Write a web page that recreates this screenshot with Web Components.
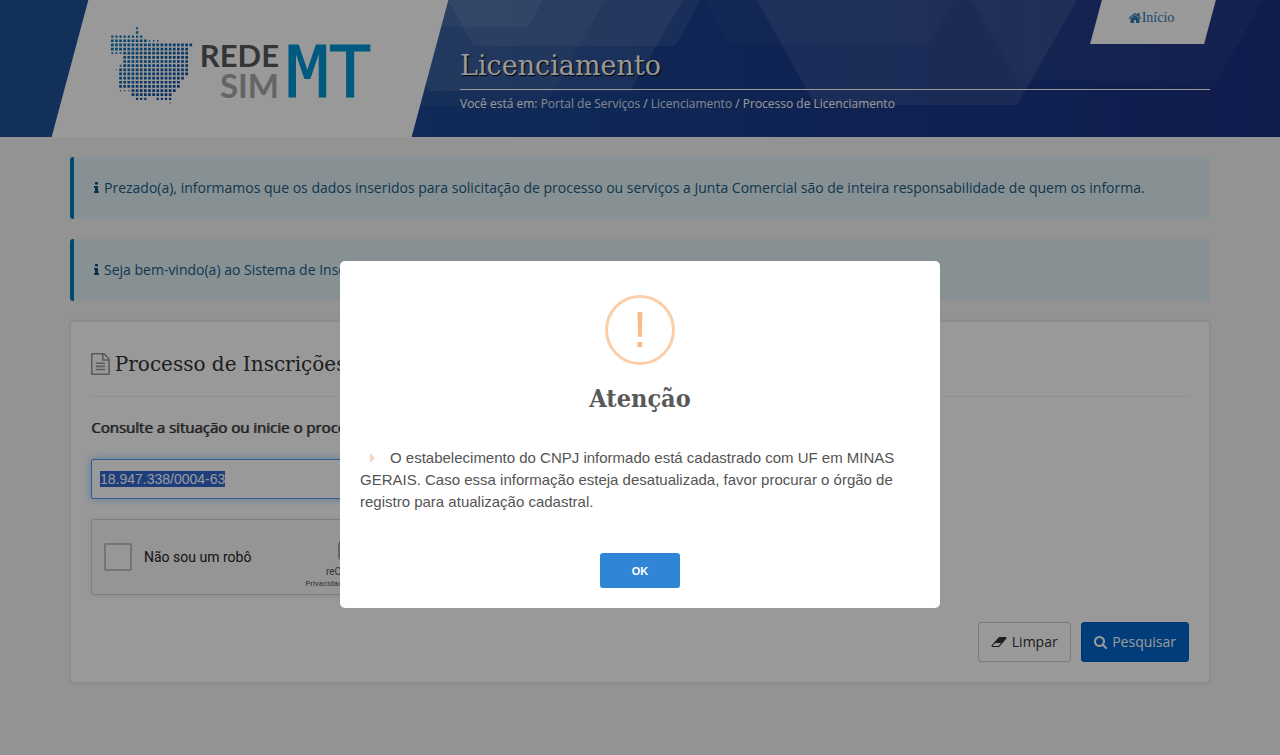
<!DOCTYPE html>
<html lang="pt-BR">
<head>
<meta charset="utf-8">
<meta name="viewport" content="width=device-width, initial-scale=1">
<title>Licenciamento</title>
<style>
  :root {
    --slab: "DejaVu Serif", serif;
    --gutter: 70px;
  }
  * { box-sizing: border-box; }
  body {
    margin: 0;
    background: #f6f6f6;
    color: #333;
    font: 14px/20px "Open Sans", sans-serif;
  }
  main {
    display: flex;
    flex-direction: column;
    gap: 20px;
    padding: 20px var(--gutter);
  }
</style>
</head>
<body>
<site-header heading="Licenciamento">
  <span slot="current">Processo de Licenciamento</span>
</site-header>
<main>
  <info-alert>Prezado(a), informamos que os dados inseridos para solicitação de processo ou serviços a Junta Comercial são de inteira responsabilidade de quem os informa.</info-alert>
  <info-alert>Seja bem-vindo(a) ao Sistema de Inscrições.</info-alert>
  <search-panel>
    <span slot="title">Processo de Inscrições</span>
  </search-panel>
</main>
<alert-modal heading="Atenção">O estabelecimento do CNPJ informado está cadastrado com UF em MINAS GERAIS. Caso essa informação esteja desatualizada, favor procurar o órgão de registro para atualização cadastral.</alert-modal>

<script>
const ICONS = {
  home: ['0 0 1792 1792', 'M1472 992v480q0 26-19 45t-45 19h-384v-384h-256v384h-384q-26 0-45-19t-19-45v-480q0-1 .5-3t.5-3l575-474 575 474q1 2 1 6zm223-69l-62 74q-8 9-21 11h-3q-13 0-21-7l-692-577-692 577q-12 8-24 7-13-2-21-11l-62-74q-8-10-7-23.5t11-21.5l719-599q32-26 76-26t76 26l244 204v-195q0-14 9-23t23-9h192q14 0 23 9t9 23v408l219 182q10 8 11 21.5t-7 23.5z'],
  info: ['576 0 640 1792', 'M1216 1344v128q0 26-19 45t-45 19h-512q-26 0-45-19t-19-45v-128q0-26 19-45t45-19h64v-384h-64q-26 0-45-19t-19-45v-128q0-26 19-45t45-19h384q26 0 45 19t19 45v576h64q26 0 45 19t19 45zm-128-1152v192q0 26-19 45t-45 19h-256q-26 0-45-19t-19-45v-192q0-26 19-45t45-19h256q26 0 45 19t19 45z'],
  file: ['128 0 1536 1792', 'M1596 380q28 28 48 76t20 88v1152q0 40-28 68t-68 28h-1344q-40 0-68-28t-28-68v-1600q0-40 28-68t68-28h896q40 0 88 20t76 48zm-444-244v376h376q-10-29-22-41l-313-313q-12-12-41-22zm384 1528v-1024h-416q-40 0-68-28t-28-68v-416h-768v1536h1280zm-1024-864q0-14 9-23t23-9h704q14 0 23 9t9 23v64q0 14-9 23t-23 9h-704q-14 0-23-9t-9-23v-64zm736 224q14 0 23 9t9 23v64q0 14-9 23t-23 9h-704q-14 0-23-9t-9-23v-64q0-14 9-23t23-9h704zm0 256q14 0 23 9t9 23v64q0 14-9 23t-23 9h-704q-14 0-23-9t-9-23v-64q0-14 9-23t23-9h704z'],
  eraser: ['0 0 2048 1792', 'M960 1408l336-384h-768l-336 384h768zm1013-1077q15 34 9.5 71.5t-30.5 65.5l-896 1024q-38 44-96 44h-768q-38 0-69.5-20.5t-47.5-54.5q-15-34-9.5-71.5t30.5-65.5l896-1024q38-44 96-44h768q38 0 69.5 20.5t47.5 54.5z'],
  search: ['64 0 1728 1792', 'M1216 832q0-185-131.5-316.5t-316.5-131.5-316.5 131.5-131.5 316.5 131.5 316.5 316.5 131.5 316.5-131.5 131.5-316.5zm512 832q0 52-38 90t-90 38q-54 0-90-38l-343-342q-179 124-399 124-143 0-273.5-55.5t-225-150-150-225-55.5-273.5 55.5-273.5 150-225 225-150 273.5-55.5 273.5 55.5 225 150 150 225 55.5 273.5q0 220-124 399l343 343q37 37 37 90z'],
  caret: ['0 0 5 10', 'M0 0l5 5-5 5z']
};

class FaIcon extends HTMLElement {
  connectedCallback() {
    const [viewBox, path] = ICONS[this.getAttribute('name')];
    this.attachShadow({ mode: 'open' }).innerHTML = `
      <style>
        :host { display: inline-block; height: 14px; flex: none; }
        svg { display: block; height: 100%; fill: currentColor; }
      </style>
      <svg viewBox="${viewBox}" aria-hidden="true"><path d="${path}"/></svg>
    `;
  }
}
customElements.define('fa-icon', FaIcon);

// [row, first column, last column, dot size]
const MAP_ROWS = [
  [0, 6, 6, 2], [1, 6, 6, 2.4], [2, 0, 7, 2.2], [3, 0, 8, 2.7], [3, 9, 11, 1.4],
  [4, 0, 19, 2.7], [5, 0, 18, 2.7], [6, 0, 2, 1.8], [6, 3, 18, 2.7],
  [7, 3, 18, 2.7], [8, 3, 18, 2.7], [9, 2, 2, 1.6], [9, 3, 18, 2.7],
  [10, 1, 1, 1], [10, 2, 18, 2.7], [11, 2, 18, 2.7], [12, 2, 17, 2.7],
  [13, 2, 16, 2.7], [14, 2, 16, 2.7], [15, 2, 4, 1.2], [15, 5, 15, 2.7],
  [16, 5, 14, 2.7], [17, 6, 8, 2.2], [17, 11, 14, 2.2], [18, 14, 14, 1.2]
];

class BrandLogo extends HTMLElement {
  connectedCallback() {
    this.attachShadow({ mode: 'open' }).innerHTML = `
      <style>
        :host { display: block; }
        svg { display: block; width: 264px; height: 78px; overflow: visible; }
        text { font-family: Lato, sans-serif; font-weight: 700; }
        .rede { font-size: 31px; fill: #58595b; }
        .sim { font-size: 33px; fill: #a7a9ac; }
        .mt {
          font-family: "DejaVu Sans Mono", monospace;
          font-weight: 400;
          font-size: 71px;
          fill: #0096d6;
          stroke: #0096d6;
          stroke-width: 1;
          stroke-linejoin: round;
        }
      </style>
      <svg viewBox="0 0 264 78" role="img" aria-label="Rede Sim MT">
        <defs>
          <linearGradient id="map" gradientUnits="userSpaceOnUse" x1="10" y1="10" x2="60" y2="70">
            <stop offset="0" stop-color="#0a7ab8"/>
            <stop offset="1" stop-color="#104a9c"/>
          </linearGradient>
        </defs>
        <path d="${this.dots()}" fill="url(#map)"/>
        <text class="rede" x="169" y="41" text-anchor="end">REDE</text>
        <text class="sim" x="169" y="72" text-anchor="end">SIM</text>
        <text class="mt" x="176" y="71">MT</text>
      </svg>
    `;
  }

  dots() {
    let d = '';
    for (const [row, from, to, size] of MAP_ROWS) {
      for (let col = from; col <= to; col++) {
        const x = (2.3 + col * 4.13 - size / 2).toFixed(2);
        const y = (2.3 + row * 4.15 - size / 2).toFixed(2);
        d += `M${x} ${y}h${size}v${size}h-${size}z`;
      }
    }
    return d;
  }
}
customElements.define('brand-logo', BrandLogo);

class SiteHeader extends HTMLElement {
  connectedCallback() {
    this.attachShadow({ mode: 'open' }).innerHTML = `
      <style>
        * { box-sizing: border-box; }
        :host {
          display: block;
          position: relative;
          overflow: hidden;
          background: linear-gradient(90deg, #1e5298 0, #1b4590 40%, #193c8a 60%, #1b2f7f 100%);
          color: #fff;
        }
        .shapes { position: absolute; top: 0; left: 0; width: 100%; height: 100%; fill: #fff; }
        .bar { display: flex; gap: 30px; position: relative; padding: 0 var(--gutter); }
        .brand, .home { position: relative; }
        .brand::before, .home::before {
          content: "";
          position: absolute;
          inset: 0;
          background: #fff;
          transform: skewX(-15deg);
        }
        .brand { width: 360px; padding: 26px 40px 33px; flex: none; }
        brand-logo { position: relative; }
        .content { flex: 1; display: flex; flex-direction: column; }
        .home {
          align-self: flex-end;
          width: 114px;
          height: 44px;
          display: flex;
          align-items: flex-start;
          justify-content: center;
          padding: 8px 4px 0 0;
          color: #337ab7;
          font: 14px/20px "Liberation Serif", serif;
          text-decoration: none;
        }
        .home span { position: relative; display: flex; align-items: center; }
        h1 {
          margin: 0;
          padding: 2px 0 3px;
          border-bottom: 1px solid #fff;
          font: 400 27px/40px var(--slab);
          text-shadow: 1px 1px 1px #000;
        }
        nav { font-size: 12px; line-height: 28px; }
        nav a { color: #d9e2f0; text-decoration: none; }
      </style>
      <svg class="shapes" viewBox="0 0 1280 137" preserveAspectRatio="xMidYMin slice" aria-hidden="true">
        <path opacity=".07" d="M380 0H543L528 27H396z"/>
        <path opacity=".08" d="M448 0H701L675 46H474z"/>
        <path opacity=".05" d="M380 0H605L545 106H400z"/>
        <path opacity=".09" d="M376 0H683L630 91H429z"/>
        <path opacity=".03" d="M705 0H955L929 44H730z"/>
        <path opacity=".09" d="M757 0H1077L1017 105H815z"/>
        <path opacity=".04" d="M971 0H1263L1217 81H1018z"/>
      </svg>
      <div class="bar">
        <div class="brand"><brand-logo></brand-logo></div>
        <div class="content">
          <a class="home" href="#"><span><fa-icon name="home"></fa-icon>Início</span></a>
          <h1>${this.getAttribute('heading')}</h1>
          <nav>Você está em: <a href="#">Portal de Serviços</a> / <a href="#">Licenciamento</a> / <slot name="current"></slot></nav>
        </div>
      </div>
    `;
  }
}
customElements.define('site-header', SiteHeader);

class InfoAlert extends HTMLElement {
  connectedCallback() {
    this.attachShadow({ mode: 'open' }).innerHTML = `
      <style>
        :host {
          display: flex;
          align-items: center;
          gap: 5px;
          padding: 21px 20px;
          border-left: 4px solid #007bbb;
          border-radius: 3px;
          background: #e1f0f5;
          color: #1a5c82;
        }
        fa-icon { color: #0d5283; }
      </style>
      <fa-icon name="info"></fa-icon><span><slot></slot></span>
    `;
  }
}
customElements.define('info-alert', InfoAlert);

class CaptchaBox extends HTMLElement {
  connectedCallback() {
    this.attachShadow({ mode: 'open' }).innerHTML = `
      <style>
        :host {
          display: flex;
          align-items: center;
          justify-content: space-between;
          width: 304px;
          height: 76px;
          padding: 0 14px 0 12px;
          border: 1px solid #d3d3d3;
          border-radius: 3px;
          background: #f9f9f9;
          box-shadow: 0 0 4px 1px rgba(0, 0, 0, .08);
          box-sizing: border-box;
          font-family: Roboto, sans-serif;
          color: #222;
        }
        label { display: flex; align-items: center; gap: 12px; }
        input {
          appearance: none;
          width: 28px;
          height: 28px;
          margin: 0;
          border: 2px solid #c1c1c1;
          border-radius: 2px;
          background: #fcfcfc;
        }
        .badge {
          display: flex;
          flex-direction: column;
          align-items: flex-end;
          padding-top: 10px;
          font-size: 10px;
          line-height: 12px;
          color: #555;
        }
        svg { width: 32px; height: 32px; margin-right: 10px; }
        small { font-size: 8px; white-space: nowrap; }
      </style>
      <label><input type="checkbox">Não sou um robô</label>
      <div class="badge">
        <svg viewBox="0 0 32 32" fill="none" stroke-width="6" aria-hidden="true">
          <path stroke="#1c3aa9" d="M16 3a13 13 0 0 1 13 13"/>
          <path stroke="#4285f4" d="M3 12A13 13 0 0 1 16 3"/>
          <path stroke="#ababab" d="M3 12a13 13 0 0 0 23 12"/>
        </svg>
        <span>reCAPTCHA</span>
        <small>Privacidade - Termos</small>
      </div>
    `;
  }
}
customElements.define('captcha-box', CaptchaBox);

class SearchPanel extends HTMLElement {
  connectedCallback() {
    this.attachShadow({ mode: 'open' }).innerHTML = `
      <style>
        :host {
          display: block;
          padding: 20px;
          border: 1px solid #ececec;
          border-radius: 3px;
          background: #fff;
          box-shadow: 0 0 3px rgba(0, 0, 0, .15);
        }
        h2 {
          display: flex;
          align-items: center;
          gap: 5px;
          margin: 0 0 20px;
          padding: 6px 0 16px;
          border-bottom: 1px solid #eee;
          font: 400 20px/32px var(--slab);
        }
        h2 fa-icon { height: 22px; color: #999; }
        form { display: flex; flex-direction: column; }
        .caption { margin-bottom: 22px; font-size: 15px; line-height: 20px; text-shadow: 1px 0 0 #777; }
        .cnpj {
          width: 360px;
          height: 40px;
          margin-bottom: 20px;
          padding: 0 8px;
          border: 1px solid #5897fb;
          border-radius: 2px;
          box-sizing: border-box;
          background: #fff;
          box-shadow: 0 0 8px rgba(82, 168, 236, .6);
          font: 14px "Liberation Sans", sans-serif;
          color: #555;
          outline: none;
        }
        .cnpj::selection { background: #3367d1; color: #fff; }
        .actions { display: flex; justify-content: flex-end; gap: 10px; margin-top: 27px; }
        button {
          display: flex;
          align-items: center;
          gap: 5px;
          height: 40px;
          padding: 0 12px;
          border: 1px solid #ccc;
          border-radius: 3px;
          background: #fff;
          color: #333;
          font: inherit;
        }
        button.primary { border-color: #005cb8; background: #0066cc; color: #fff; }
      </style>
      <h2><fa-icon name="file"></fa-icon><slot name="title"></slot></h2>
      <form>
        <label class="caption" for="cnpj">Consulte a situação ou inicie o processo</label>
        <input class="cnpj" id="cnpj" type="text" value="18.947.338/0004-63">
        <captcha-box></captcha-box>
        <div class="actions">
          <button type="reset"><fa-icon name="eraser"></fa-icon>Limpar</button>
          <button type="submit" class="primary"><fa-icon name="search"></fa-icon>Pesquisar</button>
        </div>
      </form>
    `;
    this.shadowRoot.querySelector('form').addEventListener('submit', (e) => e.preventDefault());
    const cnpj = this.shadowRoot.querySelector('#cnpj');
    cnpj.focus();
    cnpj.select();
  }
}
customElements.define('search-panel', SearchPanel);

class AlertModal extends HTMLElement {
  connectedCallback() {
    this.attachShadow({ mode: 'open' }).innerHTML = `
      <style>
        :host {
          display: flex;
          align-items: center;
          justify-content: center;
          position: fixed;
          inset: 0;
          z-index: 10;
          padding: 124px 10px 10px;
          background: rgba(0, 0, 0, .4);
          box-sizing: border-box;
        }
        :host([hidden]) { display: none; }
        .dialog {
          display: flex;
          flex-direction: column;
          align-items: center;
          width: 600px;
          padding: 34px 20px 20px;
          border-radius: 5px;
          background: #fff;
          box-sizing: border-box;
          font-family: "Liberation Sans", sans-serif;
          color: #545454;
        }
        .mark {
          display: flex;
          align-items: center;
          justify-content: center;
          width: 70px;
          height: 70px;
          border: 3px solid #facea8;
          border-radius: 50%;
          box-sizing: border-box;
          color: #f8bb86;
          font-size: 50px;
          line-height: 60px;
        }
        h2 { margin: 14px 0 28px; font: 700 25px/40px "DejaVu Serif Condensed", var(--slab); color: #595959; }
        p { margin: 0 0 40px; font-size: 15px; line-height: 22px; }
        p fa-icon { height: 10px; margin: 0 15px 0 10px; color: #fad5bb; }
        button {
          width: 80px;
          height: 35px;
          border: 0;
          border-radius: 3px;
          background: #3085d6;
          color: #fff;
          font: 700 11px "Liberation Sans", sans-serif;
        }
      </style>
      <div class="dialog" role="alertdialog" aria-labelledby="heading">
        <div class="mark">!</div>
        <h2 id="heading">${this.getAttribute('heading')}</h2>
        <p><fa-icon name="caret"></fa-icon><slot></slot></p>
        <button type="button">OK</button>
      </div>
    `;
    this.shadowRoot.querySelector('button').addEventListener('click', () => {
      this.hidden = true;
    });
  }
}
customElements.define('alert-modal', AlertModal);
</script>
</body>
</html>
